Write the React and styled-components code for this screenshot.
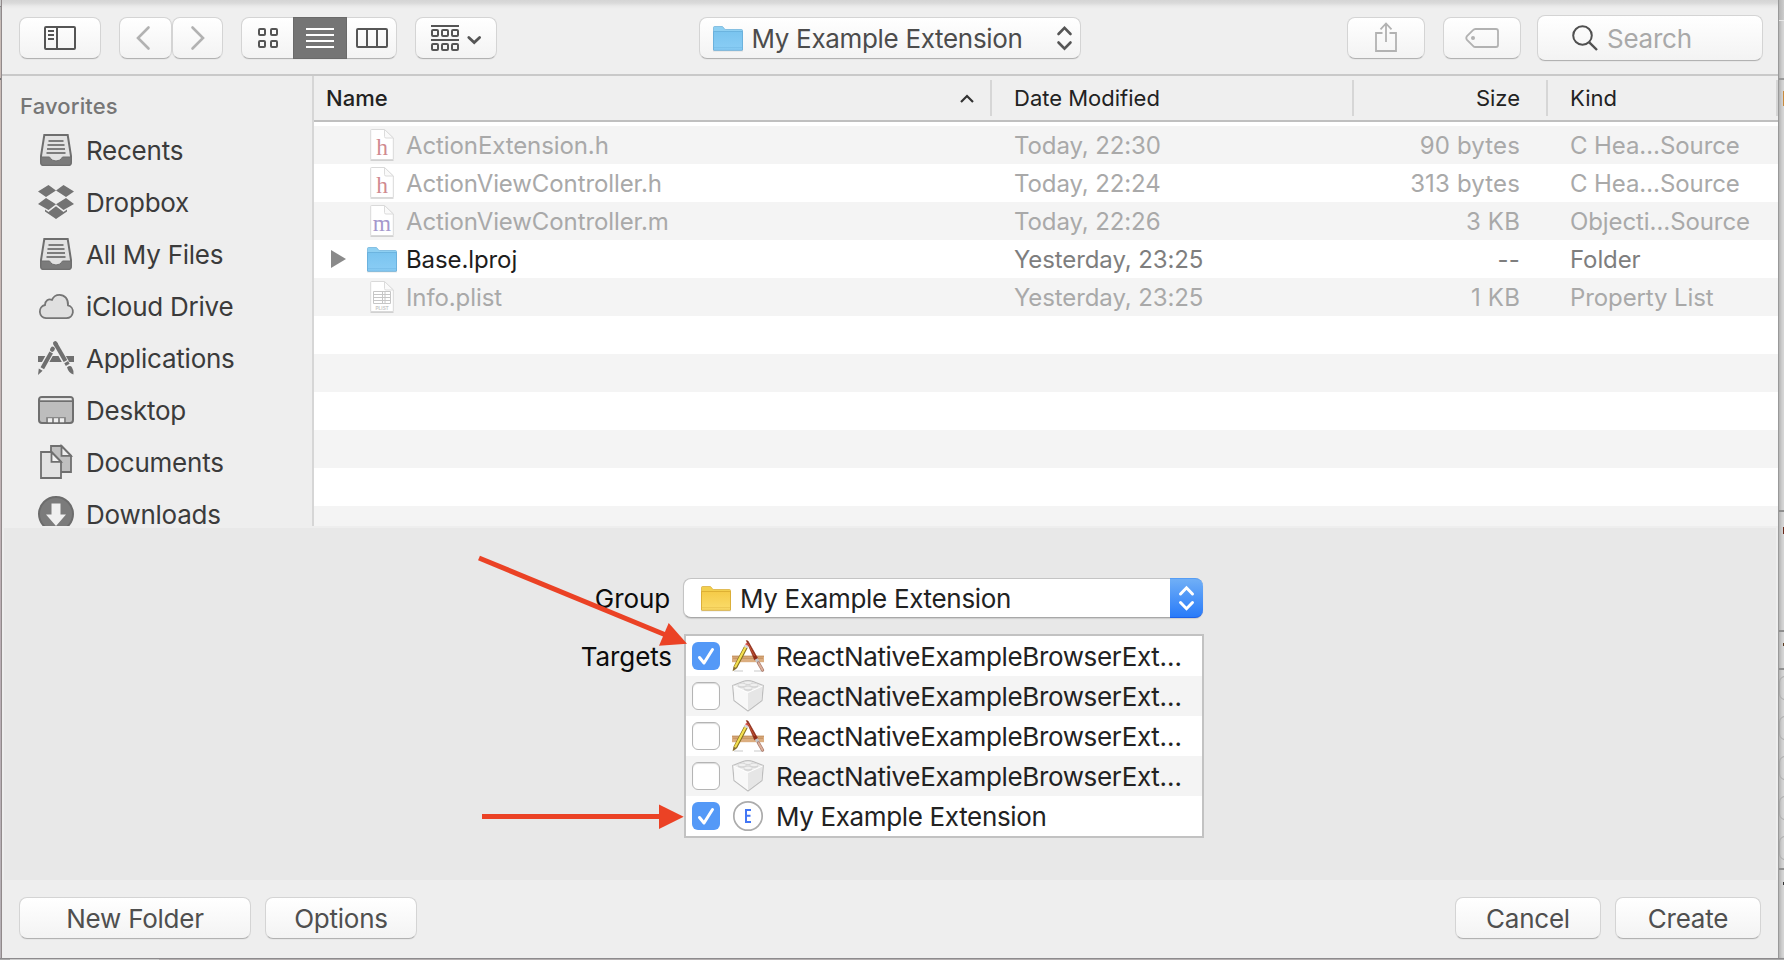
import React from 'react';
import styled, { createGlobalStyle, css } from 'styled-components';

const GlobalStyle = createGlobalStyle`
  * { box-sizing: border-box; }
  body { margin: 0; background: #d9d9d9; overflow: hidden; }
  body, button, input {
    font-family: Inter, "Liberation Sans", sans-serif;
    font-size: 26px;
    letter-spacing: -0.25px;
  }
  svg { display: block; flex: none; overflow: visible; }
`;

/* ---------- frame ---------- */

const Desktop = styled.div`
  position: relative;
  display: grid;
  grid-template-columns: 2px 1776px 6px;
  grid-template-rows: 958px 2px;
  width: 1784px;
  height: 960px;
  overflow: hidden;
`;

const LeftEdge = styled.div`
  display: flex;
  flex-direction: column;
  border-right: 1px solid #918a8b;
  background: linear-gradient(#c9bdb8, #c9b9b4 20%, #b9adb4 70%, #b5b0b5);
`;

const RightEdge = styled.div`
  display: flex;
  flex-direction: column;
  overflow: hidden;
  border-left: 1px solid #999;
  background: #d6d6d6;
  box-shadow: inset 3px 0 3px -1px rgba(0, 0, 0, 0.16);
`;

const EdgeBlock = styled.div`
  flex: none;
  height: ${(p) => p.$h}px;
  background: ${(p) => p.$bg || 'transparent'};
`;

const EdgeChecks = styled.div`
  flex: none;
  display: flex;
  flex-direction: column;
  gap: 16px;
  height: 198px;
  padding-top: 6px;
`;

const EdgeCheck = styled.div`
  flex: none;
  width: 28px;
  height: 24px;
  border: 1px solid #aaa;
  border-radius: 6px;
`;

const EdgeMark = styled.div`
  flex: none;
  align-self: flex-end;
  width: 1px;
  height: ${(p) => p.$h}px;
  background: ${(p) => p.$bg};
`;

const BottomEdge = styled.div`
  grid-column: 1 / -1;
  display: flex;
  border-top: 1px solid #8d8b8d;
  background: linear-gradient(90deg, #aaa 0 10px, #ccc 10px 159px, #b4afb0 159px 1620px, #a9a9a9 1620px);
`;

const Sheet = styled.main`
  display: flex;
  flex-direction: column;
  height: 958px;
  background: #efefef;
`;

/* ---------- toolbar ---------- */

const Toolbar = styled.header`
  flex: none;
  display: flex;
  align-items: center;
  height: 76px;
  padding: 2px 15px 0 17px;
  border-bottom: 2px solid #c9c9c9;
  background: linear-gradient(#d5d5d5, #dadada 3px, #e9e9e9 6px, #efefef 9px);
`;

const raised = css`
  border: 1px solid #d4d4d4;
  border-bottom-color: #b2b2b2;
  border-radius: 8px;
  background: linear-gradient(#fff, #f3f3f3);
  box-shadow: 0 1px 0 rgba(0, 0, 0, 0.03);
`;

const ToolButton = styled.button`
  ${raised}
  display: flex;
  align-items: center;
  justify-content: center;
  width: ${(p) => p.$w}px;
  height: 42px;
  margin: 0;
  padding: 0 ${(p) => p.$inset || 0}px 0 0;
  margin-left: ${(p) => p.$gap || 0}px;
  color: ${(p) => (p.$dim ? '#b2b2b2' : '#555')};
`;

const ViewSwitch = styled.div`
  ${raised}
  display: grid;
  grid-template-columns: 51px 54px 49px;
  width: 156px;
  height: 42px;
  margin-left: 18px;
`;

const ViewOption = styled.button`
  display: flex;
  align-items: center;
  justify-content: center;
  margin: ${(p) => (p.$on ? '-1px 0' : '0')};
  padding: 0;
  border: 0;
  color: ${(p) => (p.$on ? '#fff' : '#555')};
  background: ${(p) => (p.$on ? '#757575' : 'transparent')};
  box-shadow: ${(p) => (p.$on ? 'inset 0 0 0 1px #6a6a6a' : 'none')};
`;

const PathPopup = styled.button`
  ${raised}
  display: flex;
  align-items: center;
  width: 382px;
  height: 42px;
  margin: 0 auto 0 202px;
  padding: 0 8px 0 13px;
  color: #4c4c4c;
`;

const PopupLabel = styled.span`
  flex: 1;
  padding: 1px 0 0 8.5px;
  text-align: left;
  line-height: 32px;
  letter-spacing: -0.32px;
`;

const SearchField = styled.div`
  ${raised}
  display: flex;
  align-items: center;
  width: 226px;
  height: 46px;
  margin-left: 16px;
  padding-left: 34px;
  color: #a9a9a9;
`;

const SearchText = styled.span`
  margin-left: 9px;
  padding-top: 1px;
`;

/* ---------- browser ---------- */

const Browser = styled.section`
  flex: none;
  display: grid;
  grid-template-columns: 312px 1fr;
  height: 450px;
  overflow: hidden;
`;

const Sidebar = styled.nav`
  height: 450px;
  overflow: hidden;
  border-right: 2px solid #d6d6d6;
  background: #eeeeee;
`;

const SidebarTitle = styled.h2`
  display: flex;
  align-items: center;
  height: 48px;
  margin: 0;
  padding: 12px 0 0 18px;
  color: #767676;
  font-size: 22px;
  font-weight: 500;
  letter-spacing: 0.15px;
`;

const Place = styled.div`
  display: flex;
  align-items: center;
  gap: 12px;
  height: 52px;
  padding-left: 36px;
  color: #3b3b3b;
`;

const FileArea = styled.div`
  display: flex;
  flex-direction: column;
  min-width: 0;
  background: #fff;
`;

const columns = css`
  display: grid;
  grid-template-columns: 678px 362px 194px 1fr;
`;

const HeaderRow = styled.div`
  ${columns}
  flex: none;
  height: 46px;
  padding: 4px 0;
  border-bottom: 2px solid #bfbfbf;
  background: #efefef;
  color: #222;
  font-size: 22px;
  letter-spacing: 0;
`;

const HeaderCell = styled.div`
  display: flex;
  align-items: center;
  justify-content: ${(p) => (p.$align === 'right' ? 'flex-end' : 'space-between')};
  height: 36px;
  padding: 0 ${(p) => p.$right || 0}px 0 ${(p) => p.$left || 0}px;
  border-right: 2px solid #d6d6d6;
  font-weight: ${(p) => (p.$sorted ? 500 : 400)};
`;

const FileRows = styled.div`
  padding-top: 4px;
`;

const FileRow = styled.div`
  ${columns}
  height: 38px;
  align-items: center;
  color: ${(p) => (p.$enabled ? '#7e7e7e' : '#a9a9a9')};
  font-size: 24px;
  letter-spacing: -0.1px;
  &:nth-child(odd) { background: #f4f4f4; }
`;

const NameCell = styled.div`
  display: grid;
  grid-template-columns: 35px 38px 1fr;
  align-items: center;
  padding-left: 17px;
  color: ${(p) => (p.$enabled ? '#1d1d1d' : '#a9a9a9')};
`;

const IconSlot = styled.div`
  display: flex;
  align-items: center;
  justify-content: center;
  width: 32px;
`;

const FileName = styled.span`
  padding-left: 2px;
  white-space: nowrap;
`;

const DateCell = styled.div`
  padding-left: 22px;
`;

const SizeCell = styled.div`
  padding-right: 28px;
  text-align: right;
  letter-spacing: 0.15px;
`;

const KindCell = styled.div`
  padding-left: 22px;
  white-space: nowrap;
`;

/* ---------- accessory panel ---------- */

const Accessory = styled.section`
  flex: none;
  display: grid;
  grid-template-columns: 667px 520px;
  grid-template-rows: 40px 204px;
  row-gap: 16px;
  height: 354px;
  padding-top: 50px;
  border: 2px solid #eeeeee;
  border-bottom: 0;
  background: #e8e8e8;
  color: #0c0c0c;
`;

const FieldLabel = styled.label`
  padding-top: ${(p) => p.$top}px;
  margin-right: ${(p) => p.$right}px;
  line-height: 40px;
  text-align: right;
  letter-spacing: -0.1px;
`;

const GroupPopup = styled.div`
  display: flex;
  align-items: center;
  width: 520px;
  height: 40px;
  margin-left: 12px;
  padding-left: 17px;
  border: 1px solid #c4c4c4;
  border-bottom-color: #a8a8a8;
  border-right: 0;
  border-radius: 8px;
  background: #fff;
  box-shadow: 0 1px 1px rgba(0, 0, 0, 0.12);
  color: #222;
`;

const GroupText = styled.span`
  flex: 1;
  padding: 1px 0 0 9px;
  letter-spacing: -0.32px;
`;

const Stepper = styled.div`
  display: flex;
  align-items: center;
  justify-content: center;
  width: 33px;
  height: 40px;
  border: 1px solid #559df5;
  border-bottom-color: #1e62e8;
  border-width: 1px 0;
  border-radius: 0 8px 8px 0;
  background: linear-gradient(#70aff6, #297bf9);
`;

const TargetList = styled.div`
  width: 520px;
  height: 204px;
  margin-left: 13px;
  border: 2px solid #c2c2c2;
  background: #fff;
`;

const TargetRow = styled.div`
  display: flex;
  align-items: center;
  height: 40px;
  padding-left: 6px;
  color: #222;
  &:nth-child(even) { background: #f4f4f4; }
`;

const CheckBox = styled.div`
  display: flex;
  align-items: center;
  justify-content: center;
  width: 28px;
  height: 28px;
  margin-right: 12px;
  border: ${(p) => (p.$on ? '0' : '1px solid #b4b4b4')};
  border-radius: 6px;
  background: ${(p) => (p.$on ? '#5499f7' : '#fff')};
  box-shadow: ${(p) => (p.$on ? 'none' : 'inset 0 1px 1px rgba(0,0,0,.14)')};
`;

const TargetName = styled.span`
  margin-left: 12px;
  padding-top: 1px;
  white-space: nowrap;
  letter-spacing: -0.35px;
`;

const Annotations = styled.svg`
  position: absolute;
  left: 470px;
  top: 550px;
  width: 230px;
  height: 290px;
  pointer-events: none;
`;

/* ---------- footer ---------- */

const Footer = styled.footer`
  flex: 1;
  display: flex;
  gap: 14px;
  padding: 17px 17px 0;
  background: #eeeeee;
`;

const PushButton = styled.button`
  ${raised}
  width: ${(p) => p.$w}px;
  height: 42px;
  padding: 0;
  color: #4f4f4f;
`;

const Spacer = styled.div`
  flex: 1;
`;

/* ---------- icons ---------- */

const SidebarToggleIcon = () => (
  <svg width="32" height="24" fill="none" stroke="currentColor" strokeWidth="2">
    <rect x="1" y="1" width="30" height="22" rx="1" />
    <path d="M13 1v22M4 5h6M4 9h6M4 13h6" />
  </svg>
);

const BackIcon = ({ flip }) => (
  <svg width="14" height="24" fill="none" stroke="currentColor" strokeWidth="2.6" strokeLinecap="round">
    <path d={flip ? 'M1.5 1.5 12 12 1.5 22.5' : 'M12.5 1.5 2 12 12.5 22.5'} />
  </svg>
);

const GridIcon = () => (
  <svg width="20" height="20" fill="none" stroke="currentColor" strokeWidth="2">
    {[1, 13].map((x) => [1, 13].map((y) => <rect key={x + '-' + y} x={x} y={y} width="6" height="6" rx="1" />))}
  </svg>
);

const ListIcon = () => (
  <svg width="28" height="20" stroke="currentColor" strokeWidth="2">
    <path d="M0 1h28M0 7h28M0 13h28M0 19h28" />
  </svg>
);

const ColumnsIcon = () => (
  <svg width="32" height="20" fill="none" stroke="currentColor" strokeWidth="2">
    <rect x="1" y="1" width="30" height="18" rx="1" />
    <path d="M11 1v18M21 1v18" />
  </svg>
);

const ArrangeIcon = () => (
  <svg width="50" height="28" fill="none" stroke="currentColor" strokeWidth="2">
    <path d="M0 2h28M0 16h28" />
    {[1, 11, 21].map((x) => [6, 20].map((y) => <rect key={x + '-' + y} x={x} y={y} width="6" height="6" rx="1" />))}
    <path d="M37.8 13.5 43.2 18.6 48.6 13.5" strokeWidth="2.8" strokeLinecap="round" />
  </svg>
);

const UpDownIcon = ({ color, size = 2.6 }) => (
  <svg width="15" height="24" fill="none" stroke={color} strokeWidth={size} strokeLinecap="round">
    <path d="M1.5 8 7.5 1.8 13.5 8M1.5 16.5 7.5 22.7 13.5 16.5" />
  </svg>
);

const ShareIcon = () => (
  <svg width="22" height="30" fill="none" stroke="currentColor" strokeWidth="1.8">
    <path d="M7.5 10H1v18h20V10h-6.5M11 19V.5M5.500 6.300 11 .5l5.500 5.800" />
  </svg>
);

const TagIcon = () => (
  <svg width="34" height="20" fill="none" stroke="currentColor" strokeWidth="1.8">
    <path d="M10.500 1H31q2 0 2 2v14q0 2-2 2H10.500Q9 19 8 17.800L2 12q-1.500-2 0-4L8 2.200Q9 1 10.500 1Z" />
    <circle cx="8" cy="10" r="2" fill="currentColor" stroke="none" />
  </svg>
);

const SearchIcon = () => (
  <svg width="26" height="26" fill="none" stroke="#505050" strokeWidth="2">
    <circle cx="10.500" cy="10.500" r="9.300" />
    <path d="M17.300 17.300 25 25" strokeWidth="2.400" />
  </svg>
);

const SortIcon = () => (
  <svg width="14" height="9" fill="none" stroke="#333" strokeWidth="2.200">
    <path d="M1 8 7 2 13 8" />
  </svg>
);

const DisclosureIcon = () => (
  <svg width="15" height="18"><path d="M0 0 15 9 0 18Z" fill="#8a8a8a" /></svg>
);

const FolderIcon = ({ tone = 'blue' }) => {
  const c = tone === 'blue'
    ? { tab: '#8fd0f2', top: '#7ac4ef', low: '#8acdf5', edge: '#5fa9d6' }
    : { tab: '#f3cf4d', top: '#f5cb48', low: '#fadc6b', edge: '#d3a32a' };
  return (
    <svg width="30" height="25">
      <defs>
        <linearGradient id={'fold-' + tone} x1="0" x2="0" y1="0" y2="1">
          <stop offset="0" stopColor={c.top} />
          <stop offset="1" stopColor={c.low} />
        </linearGradient>
      </defs>
      <path d="M0 24.800h30" stroke="#000" strokeOpacity=".18" />
      <path d="M.5 24V1.500q0-1 1-1H9q.8 0 1.300.8l1 1.400q.5.800 1.500.800H28.500q1 0 1 1V24Z" fill={c.tab} stroke={c.edge} strokeOpacity=".7" strokeWidth=".9" />
      <path d="M.5 5.500h29V23.500q0 .7-.7.700H1.200q-.7 0-.7-.7Z" fill={`url(#fold-${tone})`} stroke={c.edge} strokeOpacity=".75" strokeWidth=".9" />
      <path d="M1 21.700h28" stroke={c.edge} strokeOpacity=".35" />
    </svg>
  );
};

const Page = ({ children }) => (
  <svg width="24" height="32" viewBox="0 0 24 32">
    <path d="M.5 31.500h23" stroke="#000" strokeOpacity=".14" />
    <path d="M1.500.500H14.500L23.300 9V30.500H.7V1.300q0-.8.8-.8Z" fill="#fff" stroke="#d9d9d9" />
    <path d="M14.500.500V7.500q0 1.500 1.500 1.500h7.300Z" fill="#fafafa" stroke="#dcdcdc" />
    {children}
  </svg>
);

const LetterPage = ({ letter, color }) => (
  <Page>
    <text x="12" y="25.500" textAnchor="middle" fontFamily='"Liberation Serif", serif' fontSize="23.500" letterSpacing="0" fill={color}>{letter}</text>
  </Page>
);

const PlistPage = () => (
  <Page>
    <path d="M3.500 10.500h17v12h-17ZM3.500 13.500h17M3.500 16.500h17M3.500 19.500h17M12.500 10.500v12M15 10.500v12" fill="none" stroke="#c6c6c6" />
    <text x="12" y="29.300" textAnchor="middle" fontFamily='"Liberation Sans", sans-serif' fontWeight="700" fontSize="4.600" letterSpacing="0" fill="#c6c6c6">PLIST</text>
  </Page>
);

const TrayIcon = () => (
  <svg width="36" height="36">
    <path d="M6.300 3H29.700L33 24v6q0 3-2 3H5q-2 0-2-3V24Z" fill="#e2e2e2" stroke="#6e6e6e" strokeWidth="2" />
    <path d="M3 25h8.500q1.500 4 6.500 4t6.500-4H33v6q0 2.200-2 2.200H5Q3 33.200 3 31Z" fill="#7b7b7b" stroke="#6e6e6e" />
    <path d="M10.500 9h15M9.500 13h17M9 17h18M8.500 21h19" stroke="#7d7d7d" strokeWidth="1.800" />
  </svg>
);

const DropboxIcon = () => (
  <svg width="36" height="36" fill="#737373">
    <path d="M10.500 1 18 6.500 8 13 0 7.500ZM25.500 1 36 7.500 28 13 18 6.500ZM0 20 8 14 18 20.300 10.500 26ZM28 14 36 20 25.500 26 18 20.300ZM18 22.200 25.500 28 29 25.500V27.500L18 35 7 27.500V25.500L10.500 28Z" />
  </svg>
);

const CloudIcon = () => (
  <svg width="36" height="36">
    <path d="M8 30.200H28.500A6.500 6.500 0 0 0 30 17.400C30.500 11 26.500 6.800 21.500 6.800c-3.500 0-6.300 2-7.500 5C10.500 10.300 7 12.500 7 17A6.700 6.700 0 0 0 8 30.200Z" fill="#e0e0e0" stroke="#757575" strokeWidth="1.800" />
  </svg>
);

const AppsIcon = () => (
  <svg width="36" height="36" fill="none" stroke="#6f6f6f">
    <path d="M0 19h36" strokeWidth="6" />
    <path d="M14.300 10 3.800 29M17.500 4 32 30" stroke="#eee" strokeWidth="6.600" />
    <path d="M13.200 12.500 4.300 28.300" strokeWidth="4" />
    <path d="M14.700 8.800 14.200 9.600" strokeWidth="4.400" strokeLinecap="round" />
    <path d="M.8 28.600 4.600 30.800 0 35Z" fill="#6f6f6f" stroke="none" />
    <path d="M17.300 3.500 27.500 21" strokeWidth="4.200" strokeLinecap="butt" />
    <path d="M17.100 3.200 18 4.700" strokeWidth="4.200" strokeLinecap="round" />
    <path d="M28.200 22.200 29.700 24.800" strokeWidth="4.400" />
    <path d="M29 27.200q3.500-2.500 5 .3 2.300 4 1.500 7Q30.500 33 29 27.200Z" fill="#6f6f6f" stroke="none" />
  </svg>
);

const DesktopIcon = () => (
  <svg width="36" height="36">
    <rect x="1" y="5" width="34" height="26" rx="3" fill="#bdbdbd" stroke="#6f6f6f" strokeWidth="2" />
    <path d="M2.500 7.200h31" stroke="#e9e9e9" strokeWidth="2" />
    <path d="M2 9.200h32" stroke="#6f6f6f" strokeWidth="1.600" />
    <path d="M8.500 30v-4.500h19V30" fill="#8a8a8a" stroke="#8a8a8a" />
    <path d="M10 26.200h4v4h-4ZM16 26.200h4v4h-4ZM22 26.200h4v4h-4Z" fill="#eee" />
  </svg>
);

const DocumentsIcon = () => (
  <svg width="36" height="36" strokeWidth="1.800" stroke="#6f6f6f">
    <path d="M13 2H23.500L33 11.500V28H13Z" fill="#c0c0c0" />
    <path d="M23.500 2V11.800H33Z" fill="#ededed" />
    <path d="M3 8H13.500L23 17.500V34H3Z" fill="#e2e2e2" />
    <path d="M13.500 8V17.800H23Z" fill="#f2f2f2" />
  </svg>
);

const DownloadsIcon = () => (
  <svg width="36" height="36">
    <circle cx="18" cy="18" r="17" fill="#7b7b7b" stroke="#6c6c6c" strokeWidth="2" />
    <path d="M13.500 7.500h9v11h5.500L18 30 8 18.500h5.500Z" fill="#f0f0f0" />
  </svg>
);

const AppTargetIcon = () => (
  <svg width="32" height="32" fill="none">
    <path d="M2 31h9M22 31h9" stroke="#000" strokeOpacity=".14" strokeWidth="1.500" />
    <rect x="0" y="15.800" width="32" height="6.400" fill="#dcae80" />
    <path d="M0 16.200h32M1 18.200h30" stroke="#bb8553" strokeWidth=".8" />
    <path d="M14.200 6.500 3.200 27.500" stroke="#85701f" strokeWidth="3.800" />
    <path d="M14 6.500 3 27.300" stroke="#f5e050" strokeWidth="2.200" />
    <path d="M15 5 13.700 7.500" stroke="#d5d5dc" strokeWidth="3.800" />
    <path d="M15.700 3.600 14.900 5.200" stroke="#e05656" strokeWidth="3.600" />
    <path d="M1.500 26.600 4.800 28.400.6 31.300Z" fill="#8a7030" />
    <path d="M14.300.5 16 1 25.700 18.300 22.600 20Z" fill="#8e2c18" stroke="#8e2c18" strokeWidth=".6" strokeLinejoin="round" />
    <path d="M16 3.500 22.500 16" stroke="#d0603f" strokeWidth=".9" />
    <path d="M24.300 19 26.300 22.500" stroke="#bfc4ca" strokeWidth="3.200" />
    <path d="M26.500 23 30.500 30" stroke="#a8786a" strokeWidth="3.200" strokeLinecap="round" />
    <path d="M26.500 23 30.500 30" stroke="#dcb09a" strokeWidth="1.800" strokeLinecap="round" />
  </svg>
);

const BrickIcon = () => (
  <svg width="32" height="32">
    <path d="M.7 5.500 11 1.500Q16-.3 21 1.500L31.300 5.500 30 20.500 16 31 2 20.500Z" fill="#ececec" stroke="#bdbdbd" strokeWidth="1.200" strokeLinejoin="round" />
    <path d="M1.500 6.200 16 12.500V30.200L2.600 20.200Z" fill="#f8f8f8" />
    <path d="M30.500 6.200 16 12.500V30.200L29.400 20.200Z" fill="#e6e6e6" />
    <path d="M1.500 6 16 12.500 30.500 6" fill="none" stroke="#fff" strokeWidth="1" />
    {[[16, 2.800], [10, 5], [22, 5], [16, 8]].map(([x, y]) => (
      <g key={x + '-' + y}>
        <ellipse cx={x} cy={y + 1} rx="4.200" ry="1.800" fill="#d2d2d2" />
        <ellipse cx={x} cy={y} rx="4.200" ry="1.700" fill="#f0f0f0" stroke="#cfcfcf" strokeWidth=".6" />
      </g>
    ))}
  </svg>
);

const ExtensionIcon = () => (
  <svg width="32" height="32">
    <circle cx="16" cy="16" r="14.200" fill="#fff" stroke="#acacac" strokeWidth="1.700" />
    <path d="M19 10H14V22H19M14 15.800H18.500" fill="none" stroke="#4276f5" strokeWidth="2" />
  </svg>
);

const CheckMark = () => (
  <svg width="28" height="28" fill="none" stroke="#fff" strokeWidth="3" strokeLinecap="round" strokeLinejoin="round">
    <path d="M7.500 15.500 12 21 20.500 7.500" />
  </svg>
);

/* ---------- data ---------- */

const places = [
  ['Recents', TrayIcon],
  ['Dropbox', DropboxIcon],
  ['All My Files', TrayIcon],
  ['iCloud Drive', CloudIcon],
  ['Applications', AppsIcon],
  ['Desktop', DesktopIcon],
  ['Documents', DocumentsIcon],
  ['Downloads', DownloadsIcon],
];

const headerPage = <LetterPage letter="h" color="#d08a90" />;

const files = [
  { name: 'ActionExtension.h', date: 'Today, 22:30', size: '90 bytes', kind: 'C Hea…Source', icon: headerPage },
  { name: 'ActionViewController.h', date: 'Today, 22:24', size: '313 bytes', kind: 'C Hea…Source', icon: headerPage },
  { name: 'ActionViewController.m', date: 'Today, 22:26', size: '3 KB', kind: 'Objecti…Source', icon: <LetterPage letter="m" color="#a598cc" /> },
  { name: 'Base.lproj', date: 'Yesterday, 23:25', size: '--', kind: 'Folder', icon: <FolderIcon />, folder: true },
  { name: 'Info.plist', date: 'Yesterday, 23:25', size: '1 KB', kind: 'Property List', icon: <PlistPage /> },
];

const emptyRows = [5, 6, 7, 8, 9, 10];

const targets = [
  { name: 'ReactNativeExampleBrowserExt…', Icon: AppTargetIcon, on: true },
  { name: 'ReactNativeExampleBrowserExt…', Icon: BrickIcon },
  { name: 'ReactNativeExampleBrowserExt…', Icon: AppTargetIcon },
  { name: 'ReactNativeExampleBrowserExt…', Icon: BrickIcon },
  { name: 'My Example Extension', Icon: ExtensionIcon, on: true },
];

export default function App() {
  return (
    <>
      <GlobalStyle />
      <Desktop>
        <LeftEdge>
          <EdgeBlock $h={6} $bg="#ccc" />
          <EdgeBlock $h={1} $bg="#888" />
          <EdgeBlock $h={13} $bg="#b5b5b5" />
          <EdgeBlock $h={58} />
          <EdgeBlock $h={2} $bg="#777" />
        </LeftEdge>

        <Sheet>
          <Toolbar>
            <ToolButton $w={82}><SidebarToggleIcon /></ToolButton>
            <ToolButton $w={53} $gap={18} $inset={5} $dim><BackIcon /></ToolButton>
            <ToolButton $w={51} $dim><BackIcon flip /></ToolButton>
            <ViewSwitch>
              <ViewOption><GridIcon /></ViewOption>
              <ViewOption $on><ListIcon /></ViewOption>
              <ViewOption><ColumnsIcon /></ViewOption>
            </ViewSwitch>
            <ToolButton $w={82} $gap={18}><ArrangeIcon /></ToolButton>
            <PathPopup>
              <FolderIcon />
              <PopupLabel>My Example Extension</PopupLabel>
              <UpDownIcon color="#555" />
            </PathPopup>
            <ToolButton $w={78} $dim><ShareIcon /></ToolButton>
            <ToolButton $w={78} $gap={18} $dim><TagIcon /></ToolButton>
            <SearchField>
              <SearchIcon />
              <SearchText>Search</SearchText>
            </SearchField>
          </Toolbar>

          <Browser>
            <Sidebar>
              <SidebarTitle>Favorites</SidebarTitle>
              {places.map(([label, Icon]) => (
                <Place key={label}><Icon />{label}</Place>
              ))}
            </Sidebar>
            <FileArea>
              <HeaderRow>
                <HeaderCell $left={12} $right={16} $sorted>Name<SortIcon /></HeaderCell>
                <HeaderCell $left={22}>Date Modified</HeaderCell>
                <HeaderCell $align="right" $right={26}>Size</HeaderCell>
                <HeaderCell $left={22}>Kind</HeaderCell>
              </HeaderRow>
              <FileRows>
                {files.map((f) => (
                  <FileRow key={f.name} $enabled={f.folder}>
                    <NameCell $enabled={f.folder}>
                      <div>{f.folder && <DisclosureIcon />}</div>
                      <IconSlot>{f.icon}</IconSlot>
                      <FileName>{f.name}</FileName>
                    </NameCell>
                    <DateCell>{f.date}</DateCell>
                    <SizeCell>{f.size}</SizeCell>
                    <KindCell>{f.kind}</KindCell>
                  </FileRow>
                ))}
                {emptyRows.map((n) => <FileRow key={n} />)}
              </FileRows>
            </FileArea>
          </Browser>

          <Accessory>
            <FieldLabel $top={1} $right={1}>Group</FieldLabel>
            <GroupPopup>
              <FolderIcon tone="yellow" />
              <GroupText>My Example Extension</GroupText>
              <Stepper><UpDownIcon color="#fff" size={3} /></Stepper>
            </GroupPopup>
            <FieldLabel $top={3} $right={-1}>Targets</FieldLabel>
            <TargetList>
              {targets.map(({ name, Icon, on }, i) => (
                <TargetRow key={i}>
                  <CheckBox $on={on}>{on && <CheckMark />}</CheckBox>
                  <Icon />
                  <TargetName>{name}</TargetName>
                </TargetRow>
              ))}
            </TargetList>
          </Accessory>

          <Footer>
            <PushButton $w={232}>New Folder</PushButton>
            <PushButton $w={152}>Options</PushButton>
            <Spacer />
            <PushButton $w={146}>Cancel</PushButton>
            <PushButton $w={146}>Create</PushButton>
          </Footer>
        </Sheet>

        <RightEdge>
          <EdgeBlock $h={20} $bg="linear-gradient(90deg,#b5b5b5,#cdcdcd)" />
          <EdgeBlock $h={1} $bg="#e8e8e8" />
          <EdgeBlock $h={57} />
          <EdgeBlock $h={2} $bg="#999" />
          <EdgeBlock $h={11} />
          <EdgeMark $h={15} $bg="#c98a3c" />
          <EdgeBlock $h={404} />
          <EdgeBlock $h={2} $bg="#8f8f8f" />
          <EdgeBlock $h={15} />
          <EdgeMark $h={7} $bg="#6b2a1c" />
          <EdgeBlock $h={96} />
          <EdgeBlock $h={2} $bg="#8f8f8f" />
          <EdgeBlock $h={11} />
          <EdgeMark $h={3} $bg="#5a3a20" />
          <EdgeBlock $h={22} />
          <EdgeBlock $h={2} $bg="#8f8f8f" />
          <EdgeChecks>
            {[0, 1, 2, 3, 4].map((n) => <EdgeCheck key={n} />)}
          </EdgeChecks>
          <EdgeBlock $h={2} $bg="#8f8f8f" />
          <EdgeBlock $h={12} />
          <EdgeMark $h={3} $bg="#333" />
        </RightEdge>

        <BottomEdge />

        <Annotations viewBox="470 550 230 290" fill="#eb4225" stroke="none">
          <path d="M479 558 667 635.500" stroke="#eb4225" strokeWidth="5" />
          <path d="M668.700 623 659 645.700 687 643.700Z" />
          <path d="M482 816.600H662" stroke="#eb4225" strokeWidth="5" />
          <path d="M659 804.500V829L683.700 816.700Z" />
        </Annotations>
      </Desktop>
    </>
  );
}
